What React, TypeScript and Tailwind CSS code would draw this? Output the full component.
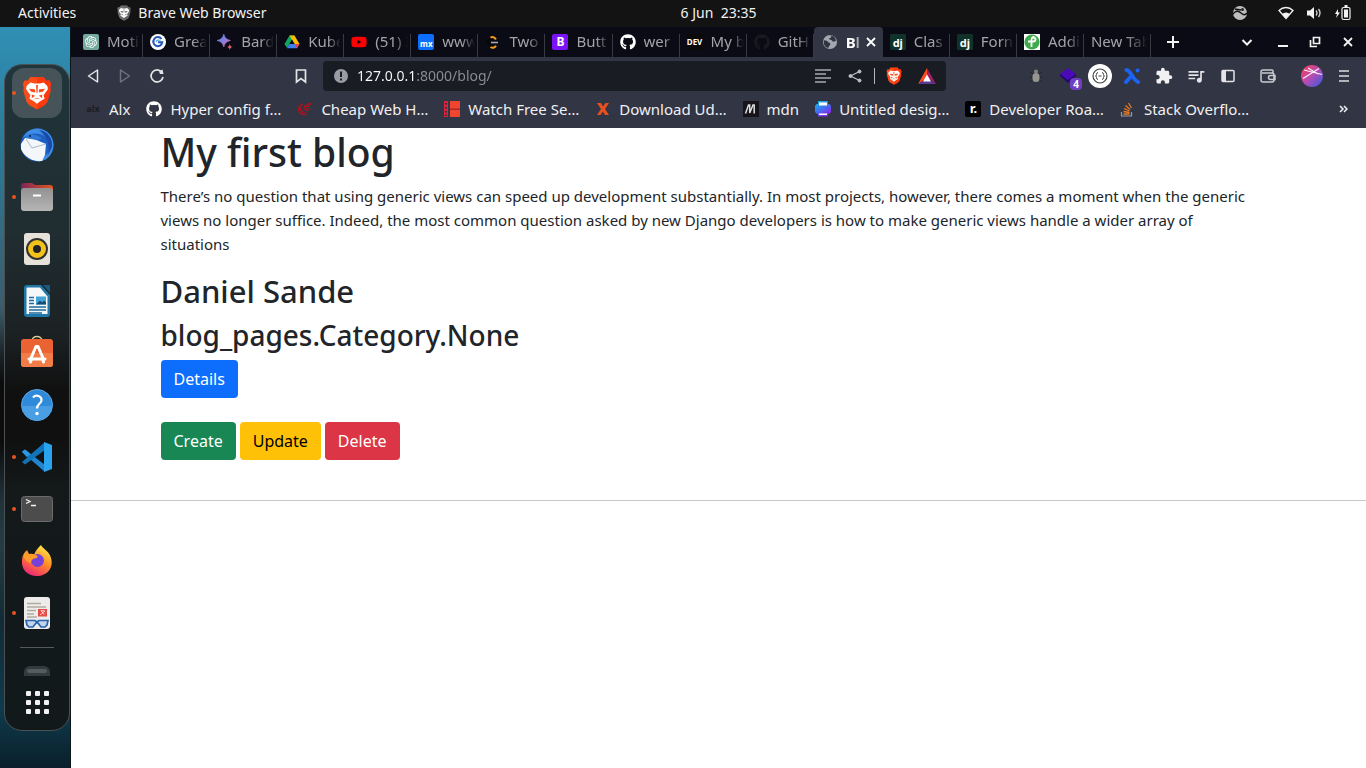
import React from "react";
import { FaGithub, FaYoutube } from "react-icons/fa";
import { SiOpenai } from "react-icons/si";
import { MdExtension, MdQueueMusic } from "react-icons/md";

type IconProps = { className?: string };

function BraveIcon({ className, tone }: IconProps & { tone: "orange" | "gray" }) {
  const base = tone === "orange" ? "#fb4b16" : "#6f6f6f";
  return (
    <svg viewBox="0 0 36 36" className={className}>
      <path d="M11 1h14l3 4 3-.5 2 4-1 4 .5 3-3.500 12L26 31l-8 4.500L10 31l-3-3.500L3.500 15.500l.5-3-1-4 2-4L8 5z" fill={base} />
      <path d="M18 1h7l3 4 3-.5 2 4-1 4 .5 3-3.500 12L26 31l-8 4.500z" fill={tone === "orange" ? "#ff2d0a" : "#5b5b5b"} opacity=".6" />
      <path d="M7 10.500L11 7l4 1h6l4-1 4 3.500.5 3.500-4.500 6.500 1 3.500-5 3-3 2.500-3-2.500-5-3 1-3.500L6.500 14z" fill="#fff" />
      <path d="M9.500 13.500l6 .5.8 2-.8 1.500-4-1zM26.500 13.500l-6 .5-.8 2 .8 1.500 4-1zM12.500 19.500l3.500 1.500-3.500 2.500zM23.500 19.500L20 21l3.500 2.500zM13.500 25l4.500-2 4.500 2L18 23.800zM17 9.500h2L18.500 18h-1z" fill={base} />
    </svg>
  );
}

function Globe({ className }: IconProps) {
  return (
    <svg viewBox="0 0 16 16" className={className}>
      <circle cx="8" cy="8" r="7" fill="#a3a8b0" />
      <path d="M2 6.200l3 .6 1.500 1.700 1.600.4v2.100l-1.500 1.700v1.400C3.500 13.500 1.600 11 1.800 7.500zM7 2l2.500.1L9 3.500l-1.800.8.2 1.300 2.100.3 1.500 1.900 2.900-.9C13.700 4 12 2 9 1.600z" fill="#31343f" />
    </svg>
  );
}

function GLogo() {
  return (
    <svg viewBox="0 0 16 16" className="size-4">
      <circle cx="8" cy="8" r="8" fill="#fff" />
      <path d="M11.500 5A4.500 4.500 0 1 0 12.300 8.200H8" fill="none" stroke="#2456b8" strokeWidth="2" />
      <path d="M10.500 6.500A3 3 0 0 0 6 8" fill="none" stroke="#4aa3ee" strokeWidth="1.200" />
    </svg>
  );
}

function BardLogo() {
  return (
    <svg viewBox="0 0 16 16" className="size-4">
      <defs>
        <linearGradient id="bard" x1="0" y1="0" x2="1" y2="1">
          <stop offset="0" stopColor="#3d8bf5" />
          <stop offset=".6" stopColor="#9b7ad6" />
          <stop offset="1" stopColor="#e0606a" />
        </linearGradient>
      </defs>
      <path d="M6.800 0c1 3.800 2.600 5.500 6.700 6.500C9.400 7.500 7.800 9.200 6.800 13 5.800 9.200 4.200 7.500 0 6.500 4.200 5.500 5.800 3.800 6.800 0z" fill="url(#bard)" stroke="url(#bard)" strokeWidth=".6" />
      <path d="M12.800 10c.4 1.900 1 2.600 3 3-2 .4-2.600 1-3 3-.4-2-1-2.600-3-3 2-.4 2.600-1.100 3-3z" fill="#e0646c" />
    </svg>
  );
}

function DriveLogo() {
  return (
    <svg viewBox="0 0 16 16" className="size-4">
      <path d="M5.500 1.500h5L8 5.800 3 14 .5 10z" fill="#10a75c" />
      <path d="M5.500 1.500h5L15.500 10h-5z" fill="#fbbc05" />
      <path d="M5.300 10h10.200L13 14.300H3z" fill="#3f7df0" />
      <path d="M10.800 10h4.700L13 14.300z" fill="#ea4335" />
      <path d="M8 5.800L10.500 10h-5z" fill="#0c0c17" />
    </svg>
  );
}

function LeetLogo() {
  return (
    <svg viewBox="0 0 16 16" className="size-4" fill="none" strokeWidth="2">
      <path d="M6.500 4L2.500 8l4 4.500" stroke="#050505" />
      <path d="M5.500 3.500c2-1 4-.5 5.500 2M5.500 13c2 1.500 4 1 5.500-1.300" stroke="#f39b1a" />
      <path d="M6 8.500h7" stroke="#a9a9a9" strokeWidth="1.600" />
    </svg>
  );
}

function ReadLogo() {
  return (
    <svg viewBox="0 0 16 16" className="size-4">
      <path d="M0 0h16v16H0z" fill="#fff" />
      <circle cx="8" cy="8" r="7.600" fill="#3eaa4b" />
      <path d="M10.500 3.200C8.500 2.500 7.500 4 7.500 6v7M4 7.500h5q2.500 0 2.500-2t-2.500-1.500" fill="none" stroke="#fff" strokeWidth="1.800" />
    </svg>
  );
}

function Tile({ text, className }: { text: string; className: string }) {
  return <span className={`flex size-4 items-center justify-center font-bold leading-none ${className}`}>{text}</span>;
}

const dj = <Tile text="dj" className="rounded-[1px] bg-[#113228] text-[11px] text-white" />;

type TabItem = { title: string; icon?: React.ReactNode; active?: boolean };

const tabs: TabItem[] = [
  {
    title: "Moti",
    icon: (
      <span className="flex size-4 items-center justify-center rounded-[2px] bg-[#74aa9c] text-white">
        <SiOpenai className="size-3" />
      </span>
    ),
  },
  { title: "Grea", icon: <GLogo /> },
  { title: "Bard", icon: <BardLogo /> },
  { title: "Kube", icon: <DriveLogo /> },
  { title: "(51) I", icon: <FaYoutube className="size-4 text-[#f00]" /> },
  { title: "www", icon: <Tile text="mx" className="rounded-[2px] bg-[#0d6efd] pt-1 text-[8px] text-white" /> },
  { title: "Two", icon: <LeetLogo /> },
  { title: "Butt", icon: <Tile text="B" className="rounded-[2px] bg-[#7a13f8] text-[12px] text-white" /> },
  { title: "wer", icon: <FaGithub className="size-4 text-white" /> },
  { title: "My b", icon: <Tile text="DEV" className="bg-[#0a0a0a] text-[8px] text-white" /> },
  { title: "GitH", icon: <FaGithub className="size-4 text-[#191a20]" /> },
  { title: "Bl", icon: <Globe className="size-4" />, active: true },
  { title: "Clas", icon: dj },
  { title: "Forn", icon: dj },
  { title: "Addi", icon: <ReadLogo /> },
  { title: "New Tab" },
];

function Tab({ title, icon, active }: TabItem) {
  if (active) {
    return (
      <div className="flex h-full min-w-0 flex-1 items-center rounded-t bg-[#323543] pl-2 pr-1">
        {icon}
        <span className="ml-2 w-3.5 overflow-hidden whitespace-nowrap font-bold text-white [mask-image:linear-gradient(to_right,#000_70%,transparent)]">
          {title}
        </span>
        <button aria-label="Close tab" className="ml-auto flex size-4 items-center justify-center text-white">
          <svg viewBox="0 0 10 10" className="size-2.5">
            <path d="M1 1l8 8M9 1L1 9" stroke="currentColor" strokeWidth="1.800" />
          </svg>
        </button>
      </div>
    );
  }
  return (
    <div className="relative flex h-full min-w-0 flex-1 items-center gap-2 pl-[7px] pr-[3px] text-[#a3a3a8]">
      {icon && <span className="shrink-0">{icon}</span>}
      <span className="min-w-0 flex-1 overflow-hidden whitespace-nowrap pb-0.5 [mask-image:linear-gradient(to_right,#000_60%,transparent)]">
        {title}
      </span>
      <span className="absolute bottom-0 right-0 top-[7px] w-px bg-[#3a3b42]" />
    </div>
  );
}

const bookmarks: { title: string; icon: React.ReactNode }[] = [
  { title: "Alx", icon: <Tile text="alx" className="text-[9px] text-[#1c1c22]" /> },
  { title: "Hyper config f…", icon: <FaGithub className="size-4 text-white" /> },
  {
    title: "Cheap Web H…",
    icon: (
      <svg viewBox="0 0 16 16" className="size-4" fill="none" stroke="#b8101c">
        <path d="M14 2.500c-4 0-6 1.500-7 4.500M14 2.500L11.500 5.500H8M13.500 8H8l3 2" strokeWidth="1.200" />
        <path d="M6 3C2.500 4 1 7 2 10.500c1 2.500 4 3.500 7.500 2.500M3.500 6.500c-.5 3 1 5 4.500 5" strokeWidth="1.200" />
      </svg>
    ),
  },
  {
    title: "Watch Free Se…",
    icon: (
      <svg viewBox="0 0 16 16" className="size-4">
        <path d="M0 0h4v16H0z" fill="#d92338" />
        <path d="M6 0h10v16H6z" fill="#f0452f" />
        <path d="M6 7.500h10v1.500H6z" fill="#a82a2c" />
        <path d="M1 2h2v1.500H1zM1 6h2v1.500H1zM1 10h2v1.500H1zM1 13.500h2V15H1z" fill="#323543" />
      </svg>
    ),
  },
  {
    title: "Download Ud…",
    icon: (
      <svg viewBox="0 0 16 16" className="size-4">
        <path d="M2 2h4l2 3.500L10.500 2H14l-4 6 4 6h-4l-2-3.500L5.500 14H2l4-6z" fill="#e8501f" />
      </svg>
    ),
  },
  {
    title: "mdn",
    icon: (
      <svg viewBox="0 0 16 16" className="size-4">
        <path d="M0 0h16v16H0z" fill="#15141a" />
        <path d="M2.500 12.500L5.500 4h1.200v8L10 4h1.200v8.500" fill="none" stroke="#ddd" strokeWidth="1.500" />
      </svg>
    ),
  },
  {
    title: "Untitled desig…",
    icon: (
      <svg viewBox="0 0 16 16" className="size-4">
        <defs>
          <linearGradient id="design" x1="0" y1="0" x2=".6" y2="1">
            <stop offset="0" stopColor="#10c4d8" />
            <stop offset=".5" stopColor="#3a7af2" />
            <stop offset="1" stopColor="#8a25ea" />
          </linearGradient>
        </defs>
        <path d="M3 0h10v3h1.500L16 5v6l-2 2h-1v2.500H3V13H2l-2-2V5l1.500-2H3z" fill="url(#design)" />
        <path d="M4 1.500h8v3H4zM4 12.500h8V14H4z" fill="#fff" />
      </svg>
    ),
  },
  { title: "Developer Roa…", icon: <Tile text="r." className="rounded-[2px] bg-black text-[13px] text-white" /> },
  {
    title: "Stack Overflo…",
    icon: (
      <svg viewBox="0 0 16 16" className="size-4" fill="none">
        <path d="M1.500 11v4h10v-4" stroke="#9a9ca3" strokeWidth="1.200" />
        <path d="M3.500 13h6M3.500 10.500l6 1M4 7.500l5.500 2.500M5.500 4.500l4.500 4M8.500 2L11.500 7" stroke="#ec7a21" strokeWidth="1.300" />
      </svg>
    ),
  },
];

function DockItem({ label, running, active, children }: { label: string; running?: boolean; active?: boolean; children: React.ReactNode }) {
  return (
    <button
      aria-label={label}
      className={
        active
          ? "relative flex size-[50px] items-center justify-center rounded-xl bg-[#465459]"
          : "relative flex size-[50px] items-center justify-center rounded-xl"
      }
    >
      {running && <span className="absolute left-0 top-[23px] size-1 rounded-full bg-[#e95420]" />}
      {children}
    </button>
  );
}

function Dock() {
  return (
    <nav
      aria-label="Dock"
      className="ml-1 mt-[37px] flex w-[66px] flex-col items-center gap-0.5 rounded-[18px] border border-[#4b5153] bg-[linear-gradient(#20353c,#202d31_25%,#1c2224_40%,#101010_49%,#101010_56%,#14191a_64%,#11191b)] pb-4 pt-[3px]"
    >
      <DockItem label="Brave" running active>
        <BraveIcon tone="orange" className="size-[34px]" />
      </DockItem>
      <DockItem label="Thunderbird">
        <svg viewBox="0 0 36 36" className="size-9">
          <circle cx="18" cy="18" r="16.500" fill="#1d5fc0" />
          <path d="M4 11C7 5 12 1.500 18 1.500c10 0 16.500 8 16.500 16.500S28 34 21 34l9-9V14C26 7 15 3 4 11z" fill="#3d8de6" />
          <path d="M20 3c9 1 14 9 13 17l-5 10c4-9 2-19-8-27z" fill="#1a4aa8" />
          <path d="M2 17l4-6 9 1 12 5-1 11-3 6c-9 1-18-4-21-12z" fill="#f4f7fa" />
          <path d="M7 12l6 9 14-4" fill="none" stroke="#a9b8ca" strokeWidth="1" />
          <path d="M5 10c6-4 14-3 18 2l-6 1-9-2z" fill="#2f78d4" />
          <circle cx="11" cy="9" r="1" fill="#102048" />
        </svg>
      </DockItem>
      <DockItem label="Files" running>
        <svg viewBox="0 0 36 36" className="size-9">
          <defs>
            <linearGradient id="folderBack" x1="0" x2="1">
              <stop offset="0" stopColor="#7d2456" />
              <stop offset="1" stopColor="#e8541f" />
            </linearGradient>
            <linearGradient id="folder" x1="0" y1="0" x2="0" y2="1">
              <stop offset="0" stopColor="#929292" />
              <stop offset="1" stopColor="#b5b5b5" />
            </linearGradient>
          </defs>
          <path d="M2 7q0-3 3-3h8l3 2h15q3 0 3 3v8H2z" fill="url(#folderBack)" />
          <rect x="2" y="9" width="32" height="23" rx="3" fill="url(#folder)" />
          <path d="M14 15.500h8v2h-8z" fill="#fff" />
        </svg>
      </DockItem>
      <DockItem label="Rhythmbox">
        <svg viewBox="0 0 36 36" className="size-9">
          <rect x="5" y="2" width="26" height="32" rx="3" fill="#e6e2da" />
          <circle cx="18" cy="18" r="11" fill="#303030" />
          <circle cx="18" cy="18" r="6.500" fill="none" stroke="#f2c21a" strokeWidth="5" />
          <circle cx="18" cy="18" r="3.500" fill="#222" />
        </svg>
      </DockItem>
      <DockItem label="Writer">
        <svg viewBox="0 0 36 36" className="size-9">
          <path d="M8 2h14l9 10v19q0 3-3 3H8q-3 0-3-3V5q0-3 3-3z" fill="#2077a8" />
          <path d="M8 4.500h13l7.500 9V31H7.500V5z" fill="#f5f7f8" />
          <path d="M24 2h7v8z" fill="#195a80" />
          <path d="M10 14.500h5M10 17.500h5M10 20.500h5M10 24h17M10 27h17M10 30h13" stroke="#1d6c9c" strokeWidth="1.600" />
          <rect x="17" y="13.500" width="10" height="8" fill="#46a5d8" />
          <path d="M17 21.500l4-4 2 2 2-2 2 2v2z" fill="#174d70" />
        </svg>
      </DockItem>
      <DockItem label="Software">
        <svg viewBox="0 0 36 36" className="size-9">
          <path d="M13 6c0-6 10-6 10 0" fill="none" stroke="#dccb9a" strokeWidth="1.500" />
          <rect x="2" y="4" width="32" height="28" rx="3" fill="#ec6333" />
          <path d="M2 18h32v11q0 3-3 3H5q-3 0-3-3z" fill="#f27c48" />
          <path d="M12.500 22L17 11.500h2L23.500 22M10 24h16M11.500 27l1-3M24.500 27l-1-3" fill="none" stroke="#fff" strokeWidth="3" strokeLinecap="round" strokeLinejoin="round" />
        </svg>
      </DockItem>
      <DockItem label="Help">
        <svg viewBox="0 0 36 36" className="size-9">
          <circle cx="18" cy="18" r="15.500" fill="#2f8bda" stroke="#5aa8e6" />
          <path d="M3 19a15 15 0 0 0 30 0z" fill="#4a9ee4" />
          <path d="M14 10.500c3-3.500 9-1.500 8.500 3-.3 3-4.500 3.500-4.500 8" fill="none" stroke="#fff" strokeWidth="2.200" />
          <circle cx="18" cy="26.500" r="1.700" fill="#fff" />
        </svg>
      </DockItem>
      <DockItem label="Code" running>
        <svg viewBox="0 0 36 36" className="size-9">
          <path d="M3 13l3-2.500L26 26v7z" fill="#1f85cf" />
          <path d="M3 23l3 2.500L26 11V3z" fill="#1173b8" />
          <path d="M25 3l8 3v24l-8 3z" fill="#2ba4f0" />
          <path d="M3 12.500l3-2 5 4-3.500 3.500z" fill="#2b98e0" />
        </svg>
      </DockItem>
      <DockItem label="Terminal" running>
        <svg viewBox="0 0 36 36" className="size-9">
          <rect x="2.500" y="5.500" width="31" height="25" rx="3" fill="#4c4c4c" stroke="#6b6b6b" />
          <path d="M7 8.500l4 2-4 2M12 14.500h5" fill="none" stroke="#f3f3f3" strokeWidth="1.300" />
        </svg>
      </DockItem>
      <DockItem label="Firefox">
        <svg viewBox="0 0 36 36" className="size-9">
          <defs>
            <linearGradient id="fox" x1=".8" y1="0" x2=".3" y2="1">
              <stop offset="0" stopColor="#fff04a" />
              <stop offset=".5" stopColor="#ff8a25" />
              <stop offset="1" stopColor="#f0237a" />
            </linearGradient>
          </defs>
          <path d="M22 2c2 4 8 6 10 13 3 10-4 18-14 18C8 33 2 26 3 17c0-4 2-7 4-9l2 4c2-1 4-1 6 0 1-4 4-7 7-10z" fill="url(#fox)" />
          <circle cx="18.500" cy="17.500" r="6.500" fill="#7740d8" />
          <path d="M5 11l3-4 2 4c4-1 8 1 9 3-2 2-5 1-6 3-1 1-1 2-1 3-5-1-8-5-7-9z" fill="#ff9b28" />
        </svg>
      </DockItem>
      <DockItem label="Document Viewer" running>
        <svg viewBox="0 0 36 36" className="size-9">
          <rect x="5" y="2" width="26" height="32" rx="3" fill="#edecea" />
          <path d="M8 8.500h14M8 12h19M8 15.500h9M8 19h7M8 22h10" stroke="#b3ab9e" strokeWidth="1.500" />
          <rect x="19" y="14" width="9" height="7.500" fill="#e64b45" />
          <path d="M21 20l5-4-4-.5 3 4" fill="none" stroke="#fff" strokeWidth=".7" />
          <path d="M7 25.500h9l2 1.500 2-1.500h9l-1 4.500-2 2h-4l-3-4h-2l-3 4h-4l-2-2z" fill="#c3d5ea" stroke="#2864aa" strokeWidth="1.700" />
        </svg>
      </DockItem>
      <span className="mt-[7px] h-px w-[34px] bg-[#555b5d]" />
      <button aria-label="Disk" className="mt-4 h-2.5 w-[26px] rounded-t-md bg-[#343b3e] p-[3px]">
        <span className="block h-1 rounded bg-[#555c60]" />
      </button>
      <button aria-label="Show Applications" className="mt-[13px] grid grid-cols-3 gap-1">
        {Array.from({ length: 9 }, (_, i) => (
          <span key={i} className="size-[5px] rounded-[1px] bg-[#f1f1f1]" />
        ))}
      </button>
    </nav>
  );
}

function ToolButton({ label, children }: { label: string; children: React.ReactNode }) {
  return (
    <button aria-label={label} className="flex h-8 w-8 shrink-0 items-center justify-center text-[#e4e4e8]">
      {children}
    </button>
  );
}

function TopBar() {
  return (
    <header className="grid h-[27px] shrink-0 grid-cols-[1fr_auto_1fr] items-center bg-[#131313] pb-0.5 text-[14px] leading-5 text-[#f2f2f2]">
      <div className="flex items-center">
        <button className="ml-[18px]">Activities</button>
        <span className="ml-10 flex items-center gap-1.5">
          <BraveIcon tone="gray" className="size-4" />
          Brave Web Browser
        </span>
      </div>
      <time className="pl-[71px] whitespace-pre">6 Jun  23:35</time>
      <div className="flex items-center justify-end gap-3 pr-3.5">
        <svg viewBox="0 0 16 16" className="mr-[18px] size-4">
          <circle cx="8" cy="8" r="7" fill="#bdbdbd" />
          <path d="M1 9c3-4 6-3 8-1s4 2.500 6 0M3 4c2 1 4 0 6 1" fill="none" stroke="#131313" strokeWidth="1.400" />
          <circle cx="10.500" cy="4.500" r="1.500" fill="#222" />
        </svg>
        <svg viewBox="0 0 16 16" className="size-4">
          <path d="M1 5.500C5 1.500 11 1.500 15 5.500L8 13.500z" fill="none" stroke="#f2f2f2" strokeWidth="1.300" />
          <path d="M4 9q4-3 8 0l-4 4.500z" fill="#f2f2f2" />
        </svg>
        <svg viewBox="0 0 16 16" className="size-4">
          <path d="M1 5.500h3L8 2v12l-4-3.500H1z" fill="#f2f2f2" />
          <path d="M10 5.500q2 2.500 0 5M12.500 4q3 4 0 8" fill="none" stroke="#c9c9c9" strokeWidth="1.400" />
        </svg>
        <svg viewBox="0 0 18 16" className="h-4 w-[18px]">
          <path d="M4 4L1 9h2l-1 4 4-5.500H4z" fill="#f2f2f2" />
          <rect x="8" y="2.500" width="8" height="12" rx="1.500" fill="none" stroke="#f2f2f2" strokeWidth="1.200" />
          <path d="M10 4.500h4v8h-4zM10.500 0h3v2h-3z" fill="#f2f2f2" />
        </svg>
      </div>
    </header>
  );
}

function TabStrip() {
  return (
    <div className="flex h-[30px] items-center bg-[#0b0b16] pl-[5px] text-[15px]">
      <div className="flex h-full min-w-0 flex-1">
        {tabs.map((tab, i) => (
          <Tab key={i} {...tab} />
        ))}
      </div>
      <div className="flex w-[215px] shrink-0 items-center text-[#f2f2f2]">
        <button aria-label="New tab" className="ml-4 flex size-3">
          <svg viewBox="0 0 12 12" className="size-3">
            <path d="M6 0v12M0 6h12" stroke="currentColor" strokeWidth="2" />
          </svg>
        </button>
        <button aria-label="Search tabs" className="ml-[62px]">
          <svg viewBox="0 0 12 12" className="size-3">
            <path d="M1.500 4L6 8.500 10.500 4" fill="none" stroke="currentColor" strokeWidth="2" />
          </svg>
        </button>
        <button aria-label="Minimize" className="ml-6">
          <svg viewBox="0 0 12 12" className="size-3">
            <path d="M1 10h10" stroke="currentColor" strokeWidth="2" />
          </svg>
        </button>
        <button aria-label="Restore" className="ml-5">
          <svg viewBox="0 0 12 12" className="size-3" fill="none" stroke="currentColor" strokeWidth="1.700">
            <path d="M4.500 1.500h6v6h-6zM1.500 4v6.500H8" />
          </svg>
        </button>
        <button aria-label="Close" className="ml-[21px]">
          <svg viewBox="0 0 12 12" className="size-3">
            <path d="M2 2l8 8M10 2l-8 8" stroke="currentColor" strokeWidth="1.800" />
          </svg>
        </button>
      </div>
    </div>
  );
}

function Toolbar() {
  return (
    <div className="flex h-[38px] items-center bg-[#323543]">
      <div className="flex w-[252px] shrink-0 items-center px-1.5">
        <ToolButton label="Back">
          <svg viewBox="0 0 16 16" className="size-4">
            <path d="M12.500 2v12L3.500 8z" fill="none" stroke="currentColor" strokeWidth="1.500" strokeLinejoin="round" />
          </svg>
        </ToolButton>
        <ToolButton label="Forward">
          <svg viewBox="0 0 16 16" className="size-4 text-[#70727d]">
            <path d="M3.500 2v12l9-6z" fill="none" stroke="currentColor" strokeWidth="1.500" strokeLinejoin="round" />
          </svg>
        </ToolButton>
        <ToolButton label="Reload">
          <svg viewBox="0 0 16 16" className="size-4">
            <path d="M12.800 4.200A6 6 0 1 0 14 9" fill="none" stroke="currentColor" strokeWidth="1.700" />
            <path d="M10 3.500L13.500 1.500 14.500 6 11 6z" fill="currentColor" />
          </svg>
        </ToolButton>
        <span className="ml-auto flex">
          <ToolButton label="Bookmark this page">
            <svg viewBox="0 0 16 16" className="size-4">
              <path d="M3.500 2h9v12L8 10.500 3.500 14z" fill="none" stroke="currentColor" strokeWidth="1.700" />
            </svg>
          </ToolButton>
        </span>
      </div>
      <div className="flex h-[30px] min-w-0 flex-1 items-center rounded bg-[#191c22] pl-[11px] text-[14px]">
        <svg viewBox="0 0 14 14" className="size-3.5 shrink-0">
          <circle cx="7" cy="7" r="7" fill="#9a9ca5" />
          <path d="M6 2.500h2v5.500H6zM6 9.500h2v2H6z" fill="#191c22" />
        </svg>
        <input
          aria-label="Address"
          defaultValue="127.0.0.1:8000/blog/"
          className="ml-[9px] min-w-0 flex-1 bg-[linear-gradient(to_right,#ffffff_60px,#8d8f95_60px)] bg-clip-text pb-0.5 text-transparent outline-none"
        />
        <button aria-label="Reader" className="mr-[17px]">
          <svg viewBox="0 0 16 14" className="h-3.5 w-4" stroke="#a8a9ad" strokeWidth="1.700">
            <path d="M0 1h16M0 5h11M0 9h16M0 13h11" />
          </svg>
        </button>
        <button aria-label="Share" className="mr-3">
          <svg viewBox="0 0 14 14" className="size-3.5" fill="#c0c1c4" stroke="#c0c1c4">
            <path d="M11.500 2.500L2.500 7l9 4.500" fill="none" strokeWidth="1.200" />
            <circle cx="11.500" cy="2.500" r="1.500" />
            <circle cx="2.500" cy="7" r="1.500" />
            <circle cx="11.500" cy="11.500" r="1.500" />
          </svg>
        </button>
        <span className="h-4 w-px bg-[#b5b6b9]" />
        <button aria-label="Shields" className="ml-2.5">
          <BraveIcon tone="orange" className="size-[18px]" />
        </button>
        <button aria-label="Rewards" className="ml-[15px] mr-2.5">
          <svg viewBox="0 0 18 16" className="h-4 w-[18px]">
            <path d="M9 0L0 16l9-6z" fill="#ff4a22" />
            <path d="M9 0l9 16-9-6z" fill="#9e1f63" />
            <path d="M0 16h18l-5-3H5z" fill="#5c3a94" />
            <path d="M9 6.500l4 7H5z" fill="#fff" />
          </svg>
        </button>
      </div>
      <div className="flex w-[420px] shrink-0 items-center pl-[74px]">
        <ToolButton label="Bug reporter">
          <svg viewBox="0 0 14 16" className="h-4 w-3.5">
            <path d="M1 4l3 2M13 4l-3 2M0 9h14M1 14l3-3M13 14l-3-3" stroke="#24262d" strokeWidth="1" />
            <rect x="3.500" y="5" width="7" height="9" rx="3.500" fill="#96958f" />
            <circle cx="7" cy="3.500" r="2" fill="#85857f" />
          </svg>
        </ToolButton>
        <button aria-label="Layers, 4 notifications" className="relative flex size-8 items-center justify-center">
          <svg viewBox="0 0 18 16" className="h-4 w-[18px]">
            <path d="M1 8l8 7 8-7V6H1z" fill="#240a70" />
            <path d="M9 0l8 6-8 6-8-6z" fill="#4b0ab8" />
          </svg>
          <span className="absolute bottom-0.5 right-0.5 flex size-3 items-center justify-center rounded-sm bg-[#6f3fc4] text-[10px] font-bold text-white">
            4
          </span>
        </button>
        <ToolButton label="JSON viewer">
          <svg viewBox="0 0 24 24" className="size-6">
            <circle cx="12" cy="12" r="12" fill="#fff" />
            <circle cx="12" cy="12" r="7" fill="none" stroke="#444" strokeWidth="1.200" />
            <path d="M10 8.500q-1.500 0-1.500 2 0 1.500-1 1.500 1 0 1 1.500 0 2 1.500 2M14 8.500q1.500 0 1.500 2 0 1.500 1 1.500-1 0-1 1.500 0 2-1.500 2M10.500 12h3" fill="none" stroke="#444" strokeWidth="1" />
          </svg>
        </ToolButton>
        <ToolButton label="Xtension">
          <svg viewBox="0 0 16 16" className="size-4" stroke="#1c63f2" strokeWidth="4" strokeLinecap="round">
            <path d="M2.500 2q2 0 5.500 5.500T14 14" fill="none" />
            <path d="M2 14l4-4.500M13.500 2.500l.1 0" />
          </svg>
        </ToolButton>
        <ToolButton label="Extensions">
          <MdExtension className="size-[18px] text-[#f1f1f3]" />
        </ToolButton>
        <ToolButton label="Media">
          <MdQueueMusic className="size-5" />
        </ToolButton>
        <ToolButton label="Sidebar">
          <svg viewBox="0 0 14 14" className="size-3.5">
            <rect x="1" y="1.500" width="12" height="11" rx="1" fill="none" stroke="currentColor" strokeWidth="1.500" />
            <path d="M1 1.500h4v11H1z" fill="currentColor" />
          </svg>
        </ToolButton>
        <span className="flex w-12 justify-center">
          <ToolButton label="Wallet">
            <svg viewBox="0 0 16 14" className="h-3.5 w-4" fill="none" stroke="#c9cace" strokeWidth="1.500">
              <path d="M13 4V2q0-1-1-1H3Q1 1 1 3v8q0 2 2 2h9q2 0 2-2V6q0-2-2-2H2M15 6.500h-4.500q-2 0-2 2t2 2H15z" />
            </svg>
          </ToolButton>
        </span>
        <button aria-label="Profile" className="flex w-10 justify-center">
          <svg viewBox="0 0 22 22" className="size-[22px]">
            <defs>
              <linearGradient id="profile" x1="0" y1="0" x2="1" y2="1">
                <stop offset="0" stopColor="#ff3d4f" />
                <stop offset=".5" stopColor="#b54bb5" />
                <stop offset="1" stopColor="#2e5be0" />
              </linearGradient>
            </defs>
            <circle cx="11" cy="11" r="11" fill="url(#profile)" />
            <path d="M2 13.500L18 3.500M3 5l18 4.500M7 3l10 6" stroke="#fff" strokeWidth="1.200" opacity=".9" />
          </svg>
        </button>
        <button aria-label="Menu" className="flex w-6 justify-center">
          <svg viewBox="0 0 10 12" className="h-3 w-2.5" stroke="#dcdce0" strokeWidth="1.500">
            <path d="M0 1h10M0 6h10M0 11h10" />
          </svg>
        </button>
      </div>
    </div>
  );
}

function BookmarksBar() {
  return (
    <div className="flex h-[33px] items-center gap-4 bg-[#323543] pb-1.5 pl-3.5 pr-[18px] text-[15px] leading-6 text-[#f0f0f3]">
      {bookmarks.map((b) => (
        <a key={b.title} href="#" className="flex shrink-0 items-center gap-2 whitespace-nowrap">
          {b.icon}
          {b.title}
        </a>
      ))}
      <button aria-label="More bookmarks" className="ml-auto">
        <svg viewBox="0 0 9 8" className="h-2 w-[9px]" fill="none" stroke="currentColor" strokeWidth="1.500">
          <path d="M1 1l3 3-3 3M5 1l3 3-3 3" />
        </svg>
      </button>
    </div>
  );
}

function Blog() {
  return (
    <main className="flex-1 bg-white text-[16px] leading-6 text-[#212529]">
      <article className="mx-auto max-w-[1140px] px-3">
        <h1 className="mb-2 text-[39px] font-medium leading-[48px]">My first blog</h1>
        <p className="mb-4 text-[15px]">
          There’s no question that using generic views can speed up development substantially. In most projects, however, there comes a moment when the generic
          <br />
          views no longer suffice. Indeed, the most common question asked by new Django developers is how to make generic views handle a wider array of
          <br />
          situations
        </p>
        <h2 className="mb-2 text-[31px] font-medium leading-[38px]">Daniel Sande</h2>
        <h3 className="mb-2 text-[28px] font-medium leading-[34px]">blog_pages.Category.None</h3>
        <button className="block h-[38px] rounded bg-[#0d6efd] px-[13px] text-white">Details</button>
        <div className="mt-6 flex gap-1">
          <button className="h-[38px] rounded bg-[#198754] px-[13px] text-white">Create</button>
          <button className="h-[38px] rounded bg-[#ffc107] px-[13px] text-black">Update</button>
          <button className="h-[38px] rounded bg-[#dc3545] px-[13px] text-white">Delete</button>
        </div>
      </article>
      <hr className="mt-10 border-[#c8c9ca]" />
    </main>
  );
}

export default function App() {
  return (
    <div className="flex min-h-screen flex-col font-['Noto_Sans',sans-serif]">
      <TopBar />
      <div className="flex flex-1">
        <aside className="w-[71px] shrink-0 border-r border-[#0c1518] bg-[linear-gradient(#308fb4,#2b7896_18%,#336c84_26%,#3c5c6b_38%,#1c2428_44%,#0c0c0d_48%,#0c0c0d_56%,#20333b_64%,#263c44_70%,#122b36_80%,#0f3a4d_92%,#0a1f2a)]">
          <Dock />
        </aside>
        <div className="flex min-w-0 flex-1 flex-col">
          <TabStrip />
          <Toolbar />
          <BookmarksBar />
          <Blog />
        </div>
      </div>
    </div>
  );
}
